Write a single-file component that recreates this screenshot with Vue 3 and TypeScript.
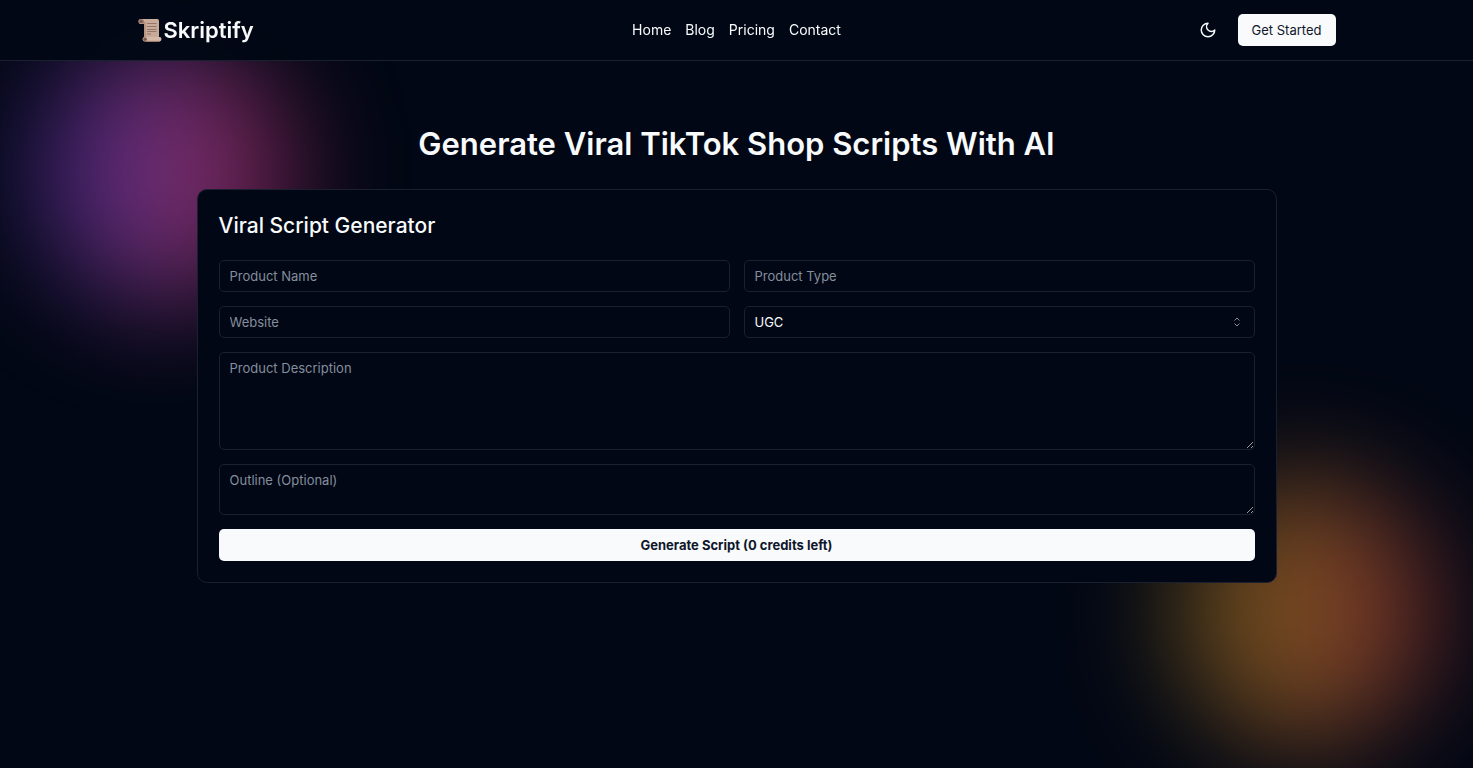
<script setup lang="ts">
import { reactive } from 'vue'

interface NavLink {
  label: string
  href: string
}

const links: NavLink[] = [
  { label: 'Home', href: '#home' },
  { label: 'Blog', href: '#blog' },
  { label: 'Pricing', href: '#pricing' },
  { label: 'Contact', href: '#contact' },
]

const styles: string[] = ['UGC', 'Review', 'Tutorial']
const credits = 0

const form = reactive({
  name: '',
  type: '',
  website: '',
  style: 'UGC',
  description: '',
  outline: '',
})
</script>

<template>
  <div class="page">
    <div class="backdrop" aria-hidden="true">
      <div class="glow glow-purple"></div>
      <div class="glow glow-orange"></div>
    </div>

    <header class="header">
      <div class="header-inner">
        <a class="brand" href="#home">
          <svg class="brand-icon" viewBox="0 0 24 24" aria-hidden="true">
            <path d="M3 1h16.500q1.500 0 1.500 2v17H6V6H2.500Q.5 6 .5 3.500T3 1z" fill="#c9ab9b" />
            <path d="M6 4h2v15H6z" fill="#b8957f" />
            <path d="M3 1Q.5 1 .5 3.500T3 5.500h3V3.500Q6 1 3 1z" fill="#9c7b70" />
            <circle cx="3.200" cy="3.400" r="1.200" fill="#6c5048" />
            <path d="M9 5.500h9.500M9 8.500h9.500M9 11.500h9.500M9 13.500h9.500M9 16h4" fill="none" stroke="#86675b" stroke-width="0.800" />
            <path d="M7 19h14.500q2 0 2 2t-2 2.500H7q-2.500 0-2.500-2.300T7 19z" fill="#d5b9a8" />
            <path d="M7 23.300h14.500" stroke="#a78271" stroke-width="1" />
            <circle cx="7" cy="21.200" r="2" fill="#91705f" />
            <circle cx="7.300" cy="21.200" r="1" fill="#654a40" />
          </svg>
          <span>Skriptify</span>
        </a>
        <nav class="nav" aria-label="Main">
          <a v-for="link in links" :key="link.href" :href="link.href">{{ link.label }}</a>
        </nav>
        <div class="actions">
          <button class="theme" type="button" aria-label="Toggle theme">
            <svg viewBox="0 0 24 24" aria-hidden="true">
              <path d="M12 3a6 6 0 0 0 9 9 9 9 0 1 1-9-9Z" fill="none" stroke="currentColor" stroke-width="2" stroke-linecap="round" stroke-linejoin="round" />
            </svg>
          </button>
          <button class="start" type="button">Get Started</button>
        </div>
      </div>
    </header>

    <main class="main">
      <h1>Generate Viral TikTok Shop Scripts With AI</h1>
      <section class="card">
        <h2>Viral Script Generator</h2>
        <form class="form" @submit.prevent>
          <input v-model="form.name" class="field" type="text" placeholder="Product Name" aria-label="Product Name" />
          <input v-model="form.type" class="field" type="text" placeholder="Product Type" aria-label="Product Type" />
          <input v-model="form.website" class="field" type="text" placeholder="Website" aria-label="Website" />
          <div class="select">
            <select v-model="form.style" class="field" aria-label="Script style">
              <option v-for="s in styles" :key="s">{{ s }}</option>
            </select>
            <svg viewBox="0 0 8 10" aria-hidden="true">
              <path d="M1.500 3.500 4 1l2.500 2.500M1.500 6.500 4 9l2.500-2.500" fill="none" stroke="currentColor" stroke-width="1" />
            </svg>
          </div>
          <textarea v-model="form.description" class="field wide description" placeholder="Product Description" aria-label="Product Description"></textarea>
          <textarea v-model="form.outline" class="field wide outline" placeholder="Outline (Optional)" aria-label="Outline (Optional)"></textarea>
          <button class="submit wide" type="submit">Generate Script ({{ credits }} credits left)</button>
        </form>
      </section>
    </main>
  </div>
</template>

<style>
body {
  margin: 0;
  background: #010714;
}
</style>

<style scoped>
.page {
  position: relative;
  min-height: 100vh;
  color: #f8fafc;
  font-family: Inter, "Liberation Sans", sans-serif;
  color-scheme: dark;
}

.page * {
  box-sizing: border-box;
}

.backdrop {
  position: absolute;
  inset: 0;
  overflow: hidden;
}

.glow {
  position: absolute;
  width: 264px;
  height: 264px;
  border-radius: 50%;
  filter: blur(56px);
}

.glow-purple {
  top: 40px;
  left: 32px;
  background: linear-gradient(to right, #5a36c8, #c850d0 42%, #d84aa0 65%, #c82868);
  opacity: 0.54;
}

.glow-orange {
  right: 36px;
  bottom: 24px;
  background: linear-gradient(to right, #a8841a, #f59030 48%, #dc4040);
  opacity: 0.5;
}

.header {
  position: relative;
  padding-bottom: 1px;
  border-bottom: 1px solid #1a2030;
  background: rgba(1, 7, 20, 0.95);
  backdrop-filter: blur(8px);
}

.header-inner {
  display: grid;
  grid-template-columns: 1fr auto 1fr;
  align-items: center;
  max-width: 1198px;
  height: 59px;
  margin: 0 auto;
}

a {
  color: inherit;
  text-decoration: none;
}

.brand {
  display: flex;
  align-items: center;
  gap: 2px;
  font-size: 22px;
  font-weight: 600;
}

.brand-icon {
  width: 24px;
  height: 24px;
}

.nav {
  display: flex;
  gap: 14px;
  font-size: 14px;
}

.actions {
  display: flex;
  justify-content: flex-end;
  align-items: center;
  gap: 14px;
}

button {
  border: 0;
  font-family: inherit;
  cursor: pointer;
}

.theme {
  display: grid;
  place-items: center;
  width: 32px;
  height: 32px;
  padding: 0;
  background: transparent;
  color: #f8fafc;
}

.theme svg {
  width: 18px;
  height: 18px;
}

.start,
.submit {
  height: 32px;
  border-radius: 5px;
  background: #f8fafc;
  color: #0f172a;
  font-size: 13px;
}

.start {
  padding: 0 14px;
}

.submit {
  font-weight: 700;
}

.main {
  position: relative;
  max-width: 1080px;
  margin: 0 auto;
  padding-top: 63px;
}

h1,
h2 {
  margin: 0;
}

h1 {
  font-size: 31px;
  font-weight: 600;
  line-height: 40px;
  text-align: center;
}

.card {
  margin-top: 25px;
  padding: 21px;
  border: 1px solid #1a2030;
  border-radius: 10px;
  background: #010714;
}

h2 {
  font-size: 21px;
  font-weight: 500;
  line-height: 30px;
}

.form {
  display: grid;
  grid-template-columns: 1fr 1fr;
  gap: 14px;
  margin-top: 19px;
}

.wide {
  grid-column: 1 / -1;
}

.field {
  display: block;
  width: 100%;
  height: 32px;
  padding: 0 10px;
  border: 1px solid #1a2030;
  border-radius: 5px;
  background: transparent;
  color: #f8fafc;
  font-family: inherit;
  font-size: 13px;
  line-height: 18px;
}

.field::placeholder {
  color: #858e9e;
}

textarea.field {
  padding: 6px 10px;
  resize: vertical;
}

.field.description {
  height: 98px;
}

.field.outline {
  height: 51px;
}

.select {
  position: relative;
}

.select select {
  appearance: none;
}

.select svg {
  position: absolute;
  top: 11px;
  right: 14px;
  width: 8px;
  height: 10px;
  color: #858e9e;
  pointer-events: none;
}
</style>
